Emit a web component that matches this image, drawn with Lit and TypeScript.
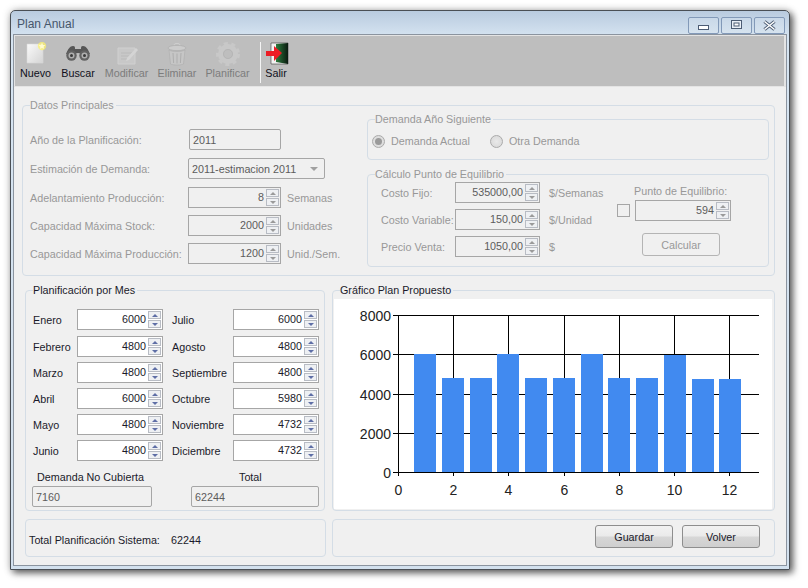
import { LitElement, html, css, svg } from 'lit';
import { customElement } from 'lit/decorators.js';

const MONTHS: [string, number, string, number][] = [
  ['Enero', 6000, 'Julio', 6000],
  ['Febrero', 4800, 'Agosto', 4800],
  ['Marzo', 4800, 'Septiembre', 4800],
  ['Abril', 6000, 'Octubre', 5980],
  ['Mayo', 4800, 'Noviembre', 4732],
  ['Junio', 4800, 'Diciembre', 4732],
];

const PLAN = [6000, 4800, 4800, 6000, 4800, 4800, 6000, 4800, 4800, 5980, 4732, 4732];

// chart coordinates are relative to the white plot box
const X0 = 64;
const X_STEP = 27.62;
const Y0 = 173;
const Y_SCALE = 157 / 8000;

@customElement('app-root')
export class AppRoot extends LitElement {
  static styles = css`
    :host {
      display: block;
      width: 808px;
      height: 588px;
      background: #fff;
      overflow: hidden;
      font-family: "Liberation Sans", Arial, sans-serif;
      font-size: 10.75px;
      color: #1a1a2a;
    }
    .window {
      box-sizing: border-box;
      width: 780px;
      height: 560px;
      margin: 10px 0 0 10px;
      padding: 0 3px 4px 3px;
      display: flex;
      flex-direction: column;
      background: linear-gradient(180deg, #b9cbdf 0, #d6e4f1 26px, #d3e1ee 100%);
      border: 1px solid #4a4f55;
      border-radius: 5px 5px 0 0;
      box-shadow: 3px 3px 7px rgba(0, 0, 0, 0.6), 0 0 9px rgba(0, 0, 0, 0.2);
    }
    .titlebar {
      flex: none;
      height: 24px;
      display: flex;
      align-items: center;
      justify-content: space-between;
      padding-left: 3px;
      padding-top: 1px;
      box-sizing: border-box;
      font-size: 12px;
      color: #46566b;
    }
    .controls {
      display: flex;
      gap: 2px;
      margin-top: 3px;
      margin-right: 1px;
    }
    .controls div {
      width: 29px;
      height: 15px;
      border: 1px solid #8299b8;
      border-radius: 2px;
      background: linear-gradient(180deg, #c9d8e8, #d6e3ef);
      display: flex;
      align-items: center;
      justify-content: center;
    }
    .client {
      flex: 1;
      background: #f0f0f0;
      outline: 1px solid #8b949f;
      display: flex;
      flex-direction: column;
      min-height: 0;
    }
    .toolbar {
      flex: none;
      box-sizing: border-box;
      height: 52px;
      display: flex;
      padding-left: 5px;
      background: #bebebe;
      border: 1px solid #e4e4e4;
      border-width: 1px 2px 1px 1px;
    }
    .tool {
      display: flex;
      flex-direction: column;
      align-items: center;
      margin-right: 11px;
      padding-top: 6px;
      height: 100%;
      box-sizing: border-box;
      color: #10101c;
      line-height: 15px;
      white-space: nowrap;
    }
    .tool svg {
      display: block;
      height: 24px;
      width: 28px;
      flex: none;
    }
    .tool.off {
      color: #7c7c7c;
    }
    .tool.salir {
      margin: 0 0 0 5px;
    }
    .sep {
      width: 1px;
      margin: 6px 0 3px;
      background: #f4f4f4;
    }
    .content {
      flex: 1;
      padding-top: 18px;
    }
    .group {
      position: relative;
      box-sizing: border-box;
      border: 1px solid #d4dde6;
      border-radius: 4px;
    }
    .legend {
      position: absolute;
      left: 7px;
      top: -8px;
      padding: 0 2px 0 0;
      line-height: 14px;
      background: #f0f0f0;
      white-space: nowrap;
    }
    .datos {
      width: 753px;
      height: 171px;
      margin-left: 8px;
      display: flex;
      color: #989898;
    }
    .datos-left {
      width: 344px;
      flex: none;
      padding: 23px 0 0 7px;
      box-sizing: border-box;
    }
    .row {
      display: flex;
      align-items: center;
      height: 21px;
      margin-bottom: 7px;
      white-space: nowrap;
    }
    .row.loose {
      margin-bottom: 8px;
    }
    .row > .name {
      width: 158px;
      flex: none;
    }
    .unit {
      margin-left: 6px;
    }
    .box {
      box-sizing: border-box;
      height: 21px;
      border: 1px solid #a6a6a6;
      background: #fff;
      display: flex;
      align-items: center;
      flex: none;
      line-height: 14px;
    }
    .box.off {
      background: #f0f0f0;
      color: #5c5c5c;
    }
    .spin .val {
      flex: 1;
      text-align: right;
      padding: 0 2px 2px 0;
    }
    .arrows {
      flex: none;
      width: 13px;
      height: 17px;
      margin-right: 1px;
      display: flex;
      flex-direction: column;
      gap: 1px;
    }
    .arrows span {
      flex: 1;
      border: 1px solid #b8bcc4;
      background: #eef0f3;
      display: flex;
      align-items: center;
      justify-content: center;
    }
    .arrows i {
      display: block;
      width: 0;
      height: 0;
      border-left: 3px solid transparent;
      border-right: 3px solid transparent;
    }
    .arrows .up {
      border-bottom: 3px solid #5e6ea6;
    }
    .arrows .down {
      border-top: 3px solid #5e6ea6;
    }
    .off .arrows .up {
      border-bottom-color: #9a9a9a;
    }
    .off .arrows .down {
      border-top-color: #9a9a9a;
    }
    .w92 {
      width: 93px;
    }
    .plain {
      padding-left: 3px;
      border-radius: 2px;
    }
    .anio {
      margin-left: 1px;
      width: 92px;
    }
    .combo {
      width: 137px;
      padding-left: 3px;
      border-radius: 2px;
      justify-content: space-between;
      padding-right: 6px;
    }
    .combo::after {
      content: '';
      border-left: 4px solid transparent;
      border-right: 4px solid transparent;
      border-top: 4px solid #a0a0a0;
    }
    .datos-right {
      padding-top: 13px;
    }
    .demanda {
      width: 402px;
      height: 41px;
      padding: 14px 0 0 4px;
      display: flex;
      align-items: flex-start;
      line-height: 14px;
    }
    .radio {
      display: flex;
      gap: 6px;
      align-items: center;
    }
    .radio.first {
      width: 118px;
    }
    .dot {
      box-sizing: border-box;
      width: 13px;
      height: 13px;
      border-radius: 50%;
      border: 1px solid #aaa;
      background: radial-gradient(circle, #e9e9e9 0, #d6d6d6 100%);
      display: flex;
      align-items: center;
      justify-content: center;
    }
    .dot.on::after {
      content: '';
      width: 7px;
      height: 7px;
      border-radius: 50%;
      background: #9a9a9a;
    }
    .calculo {
      width: 402px;
      height: 93px;
      margin-top: 14px;
      display: flex;
    }
    .calc-left {
      width: 249px;
      flex: none;
      box-sizing: border-box;
      padding: 7px 0 0 13px;
    }
    .calc-left .row {
      margin-bottom: 6px;
    }
    .calc-left .name {
      width: 74px;
    }
    .w85 {
      width: 85px;
    }
    .calc-left .unit {
      margin-left: 9px;
    }
    .calc-right {
      padding-top: 8px;
    }
    .punto-label {
      line-height: 16px;
      margin: 0 0 1px 17px;
    }
    .punto {
      display: flex;
      align-items: center;
      gap: 5px;
    }
    .check {
      box-sizing: border-box;
      width: 13px;
      height: 13px;
      border: 1px solid #a6a6a6;
      background: #f0f0f0;
    }
    .w96 {
      width: 96px;
    }
    .button {
      box-sizing: border-box;
      width: 78px;
      height: 23px;
      display: flex;
      align-items: center;
      justify-content: center;
      border: 1px solid #8e8e8e;
      border-radius: 3px;
      background: linear-gradient(180deg, #f2f2f2 0, #ebebeb 45%, #d6d6d6 55%, #cfcfcf 100%);
    }
    .button.off {
      margin: 12px 0 0 25px;
      border-color: #b4b4b4;
      background: #f0f0f0;
      color: #989898;
    }
    .middle {
      display: flex;
      gap: 7px;
      margin: 14px 0 0 11px;
    }
    .plan {
      width: 300px;
      height: 221px;
      padding: 18px 0 0 7px;
    }
    .plan .row {
      margin-bottom: 5px;
    }
    .plan .row.first {
      margin-bottom: 6px;
    }
    .plan .name {
      width: 44px;
    }
    .plan .name2 {
      width: 61px;
      margin-left: 9px;
      flex: none;
    }
    .w86 {
      width: 86px;
    }
    .totals {
      display: grid;
      grid-template-columns: 120px 128px;
      column-gap: 39px;
      margin: 8px 0 0 -1px;
      line-height: 16px;
    }
    .totals .cap {
      padding: 0 0 1px 5px;
      white-space: nowrap;
    }
    .totals .cap.second {
      padding-left: 48px;
    }
    .grafico {
      width: 443px;
      height: 221px;
      padding: 8px 1px 0 0;
    }
    .grafico svg {
      display: block;
      width: 438px;
      height: 210px;
      margin-left: 1px;
      background: #fff;
    }
    .grafico text {
      font-family: "Liberation Sans", sans-serif;
      font-size: 14px;
      fill: #222;
    }
    .bottom {
      display: flex;
      gap: 6px;
      margin: 8px 0 0 11px;
    }
    .sum {
      width: 301px;
      height: 38px;
      display: flex;
      align-items: center;
      padding-left: 3px;
      padding-top: 3px;
    }
    .sum span:first-child {
      flex: none;
      width: 142px;
    }
    .actions {
      width: 443px;
      height: 38px;
      display: flex;
      justify-content: flex-end;
      gap: 9px;
      padding: 5px 14px 0 0;
    }
  `;

  private spin(value: string, widthClass: string, off: boolean) {
    return html`<div class="box spin ${widthClass} ${off ? 'off' : ''}">
      <span class="val">${value}</span>
      <div class="arrows"><span><i class="up"></i></span><span><i class="down"></i></span></div>
    </div>`;
  }

  private chart() {
    const ys = [0, 2000, 4000, 6000, 8000];
    const xs = [0, 2, 4, 6, 8, 10, 12];
    const px = (v: number) => Math.round(X0 + v * X_STEP) + 0.5;
    const py = (v: number) => Math.round(Y0 - v * Y_SCALE) + 0.5;
    return html`<svg viewBox="0 0 438 210">
      ${ys.map(v => svg`
        <line x1="59" x2="425" y1=${py(v)} y2=${py(v)} stroke="#000"></line>
        <text x="57" y=${py(v) + 5} text-anchor="end">${v}</text>`)}
      ${xs.map(v => svg`
        <line x1=${px(v)} x2=${px(v)} y1="16" y2="177" stroke="#000"></line>
        <text x=${px(v)} y="196" text-anchor="middle">${v}</text>`)}
      ${PLAN.map((v, i) => {
        const left = Math.round(80 + 27.75 * i);
        const top = Math.round(Y0 - v * Y_SCALE);
        return svg`<rect x=${left} y=${top} width="22" height=${Y0 - top} fill="#418af0"></rect>`;
      })}
      <line x1="59" x2="425" y1="173.5" y2="173.5" stroke="#000"></line>
    </svg>`;
  }

  private icons = {
    nuevo: svg`<defs><linearGradient id="pg" x1="0" y1="0" x2="1" y2="1"><stop offset="0" stop-color="#fafafa"></stop><stop offset="1" stop-color="#d4d4d4"></stop></linearGradient></defs>
      <path d="M5 2h14l2 3v16H5z" fill="url(#pg)" stroke="#d8d8d8" stroke-width=".6"></path>
      <circle cx="20" cy="4" r="4.2" fill="#fff36a" opacity=".7"></circle>
      <path d="M20 .6l1 2.3 2.4.2-1.8 1.6.6 2.4-2.2-1.3-2.2 1.3.6-2.4-1.8-1.6 2.4-.2z" fill="#fffbd0"></path>`,
    buscar: svg`<path d="M9 4c-3 0-5 3-7 8l6 1c2-1 3-2 6-2s4 1 6 2l6-1c-2-5-4-8-7-8-2 0-2 1-2 3h-6c0-2 0-3-2-3z" fill="#565656"></path>
      <circle cx="7.5" cy="13.500" r="5.200" fill="#626262"></circle><circle cx="20.5" cy="13.500" r="5.200" fill="#626262"></circle>
      <circle cx="7.5" cy="13.500" r="3" fill="#b0b0b0"></circle><circle cx="20.5" cy="13.500" r="3" fill="#b0b0b0"></circle>
      <circle cx="7.5" cy="13.500" r="1.500" fill="#3a3a3a"></circle><circle cx="20.5" cy="13.500" r="1.500" fill="#3a3a3a"></circle>`,
    modificar: svg`<path d="M5 6h17v16H5z" fill="#c8c8c8" stroke="#d0d0d0"></path>
      <path d="M8 11h11M8 14h11M8 17h7" stroke="#bababa"></path>
      <path d="M14 16l9-10 2 2-9 10-3 1z" fill="#d4d4d4"></path>`,
    eliminar: svg`<ellipse cx="14" cy="3" rx="3" ry="1.6" fill="none" stroke="#cfcfcf"></ellipse>
      <ellipse cx="14" cy="6" rx="9" ry="2.6" fill="#cccccc" stroke="#a9a9a9" stroke-width=".6"></ellipse>
      <path d="M6 8l1.5 14c2 1.4 11 1.4 13 0L22 8c-3 2-13 2-16 0z" fill="#c6c6c6" stroke="#adadad" stroke-width=".6"></path>
      <path d="M10 11l.6 10M14 11.500v10M18 11l-.6 10" stroke="#aeaeae"></path>`,
    planificar: svg`<circle cx="14" cy="12" r="7.500" fill="none" stroke="#c8c8c8" stroke-width="5"></circle>
      <circle cx="14" cy="12" r="10.500" fill="none" stroke="#c8c8c8" stroke-width="3" stroke-dasharray="4 3.500"></circle>
      <circle cx="14" cy="12" r="4.500" fill="none" stroke="#b6b6b6"></circle>`,
    salir: svg`<defs><linearGradient id="dg" x1="0" y1="0" x2="1" y2="0"><stop offset="0" stop-color="#2c7a3c"></stop><stop offset="1" stop-color="#0a1a10"></stop></linearGradient></defs>
      <path d="M9 1h17v21H9z" fill="#f2f2f2" stroke="#3a3a3a" stroke-width=".6"></path>
      <path d="M14 2l12-1v21l-12-2z" fill="url(#dg)"></path>
      <circle cx="16" cy="11" r=".9" fill="#ddd"></circle>
      <path d="M4 9h8V4l8 7-8 8v-5H4z" fill="#ec1c24"></path>`,
  };

  private tool(label: string, icon: unknown, width: number, off = false, extra = '') {
    return html`<div class="tool ${off ? 'off' : ''} ${extra}" style="width:${width}px">
      <svg viewBox="0 0 28 24">${icon}</svg>${label}
    </div>`;
  }

  protected render() {
    return html`
      <div class="window">
        <div class="titlebar">
          <span>Plan Anual</span>
          <div class="controls">
            <div>
              <svg width="11" height="11" viewBox="0 0 11 11"><rect x=".5" y="5.500" width="10" height="4" fill="#fff" stroke="#4c5c74"></rect></svg>
            </div>
            <div>
              <svg width="11" height="11" viewBox="0 0 11 11"><rect x=".5" y=".5" width="10" height="8" fill="#e9eff6" stroke="#4c5c74"></rect><rect x="3" y="3" width="5" height="3" fill="#fff" stroke="#4c5c74"></rect></svg>
            </div>
            <div>
              <svg width="13" height="11" viewBox="0 0 13 11"><path d="M1.500 1.500l10 8M11.500 1.500l-10 8" stroke="#4c5c74" stroke-width="3.400"></path><path d="M1.500 1.500l10 8M11.500 1.500l-10 8" stroke="#fff" stroke-width="1.600"></path></svg>
            </div>
          </div>
        </div>
        <div class="client">
          <div class="toolbar">
            ${this.tool('Nuevo', this.icons.nuevo, 31)}
            ${this.tool('Buscar', this.icons.buscar, 32)}
            ${this.tool('Modificar', this.icons.modificar, 43, true)}
            ${this.tool('Eliminar', this.icons.eliminar, 36, true)}
            ${this.tool('Planificar', this.icons.planificar, 43, true)}
            <div class="sep"></div>
            ${this.tool('Salir', this.icons.salir, 20, false, 'salir')}
          </div>
          <div class="content">
            <div class="group datos">
              <span class="legend">Datos Principales</span>
              <div class="datos-left">
                <div class="row loose">
                  <span class="name">Año de la Planificación:</span>
                  <div class="box off plain anio">2011</div>
                </div>
                <div class="row loose">
                  <span class="name">Estimación de Demanda:</span>
                  <div class="box off combo">2011-estimacion 2011</div>
                </div>
                <div class="row">
                  <span class="name">Adelantamiento Producción:</span>
                  ${this.spin('8', 'w92', true)}<span class="unit">Semanas</span>
                </div>
                <div class="row">
                  <span class="name">Capacidad Máxima Stock:</span>
                  ${this.spin('2000', 'w92', true)}<span class="unit">Unidades</span>
                </div>
                <div class="row">
                  <span class="name">Capacidad Máxima Producción:</span>
                  ${this.spin('1200', 'w92', true)}<span class="unit">Unid./Sem.</span>
                </div>
              </div>
              <div class="datos-right">
                <div class="group demanda">
                  <span class="legend">Demanda Año Siguiente</span>
                  <div class="radio first"><span class="dot on"></span>Demanda Actual</div>
                  <div class="radio"><span class="dot"></span>Otra Demanda</div>
                </div>
                <div class="group calculo">
                  <span class="legend">Cálculo Punto de Equilibrio</span>
                  <div class="calc-left">
                    <div class="row">
                      <span class="name">Costo Fijo:</span>
                      ${this.spin('535000,00', 'w85', true)}<span class="unit">$/Semanas</span>
                    </div>
                    <div class="row">
                      <span class="name">Costo Variable:</span>
                      ${this.spin('150,00', 'w85', true)}<span class="unit">$/Unidad</span>
                    </div>
                    <div class="row">
                      <span class="name">Precio Venta:</span>
                      ${this.spin('1050,00', 'w85', true)}<span class="unit">$</span>
                    </div>
                  </div>
                  <div class="calc-right">
                    <div class="punto-label">Punto de Equilibrio:</div>
                    <div class="punto">
                      <span class="check"></span>
                      ${this.spin('594', 'w96', true)}
                    </div>
                    <div class="button off">Calcular</div>
                  </div>
                </div>
              </div>
            </div>

            <div class="middle">
              <div class="group plan">
                <span class="legend">Planificación por Mes</span>
                ${MONTHS.map(([a, av, b, bv], i) => html`
                  <div class="row ${i === 0 ? 'first' : ''}">
                    <span class="name">${a}</span>
                    ${this.spin(String(av), 'w86', false)}
                    <span class="name2">${b}</span>
                    ${this.spin(String(bv), 'w86', false)}
                  </div>`)}
                <div class="totals">
                  <span class="cap">Demanda No Cubierta</span>
                  <span class="cap second">Total</span>
                  <div class="box off plain">7160</div>
                  <div class="box off plain">62244</div>
                </div>
              </div>
              <div class="group grafico">
                <span class="legend">Gráfico Plan Propuesto</span>
                ${this.chart()}
              </div>
            </div>

            <div class="bottom">
              <div class="group sum">
                <span>Total Planificación Sistema:</span>
                <span>62244</span>
              </div>
              <div class="group actions">
                <div class="button">Guardar</div>
                <div class="button">Volver</div>
              </div>
            </div>
          </div>
        </div>
      </div>
    `;
  }
}
